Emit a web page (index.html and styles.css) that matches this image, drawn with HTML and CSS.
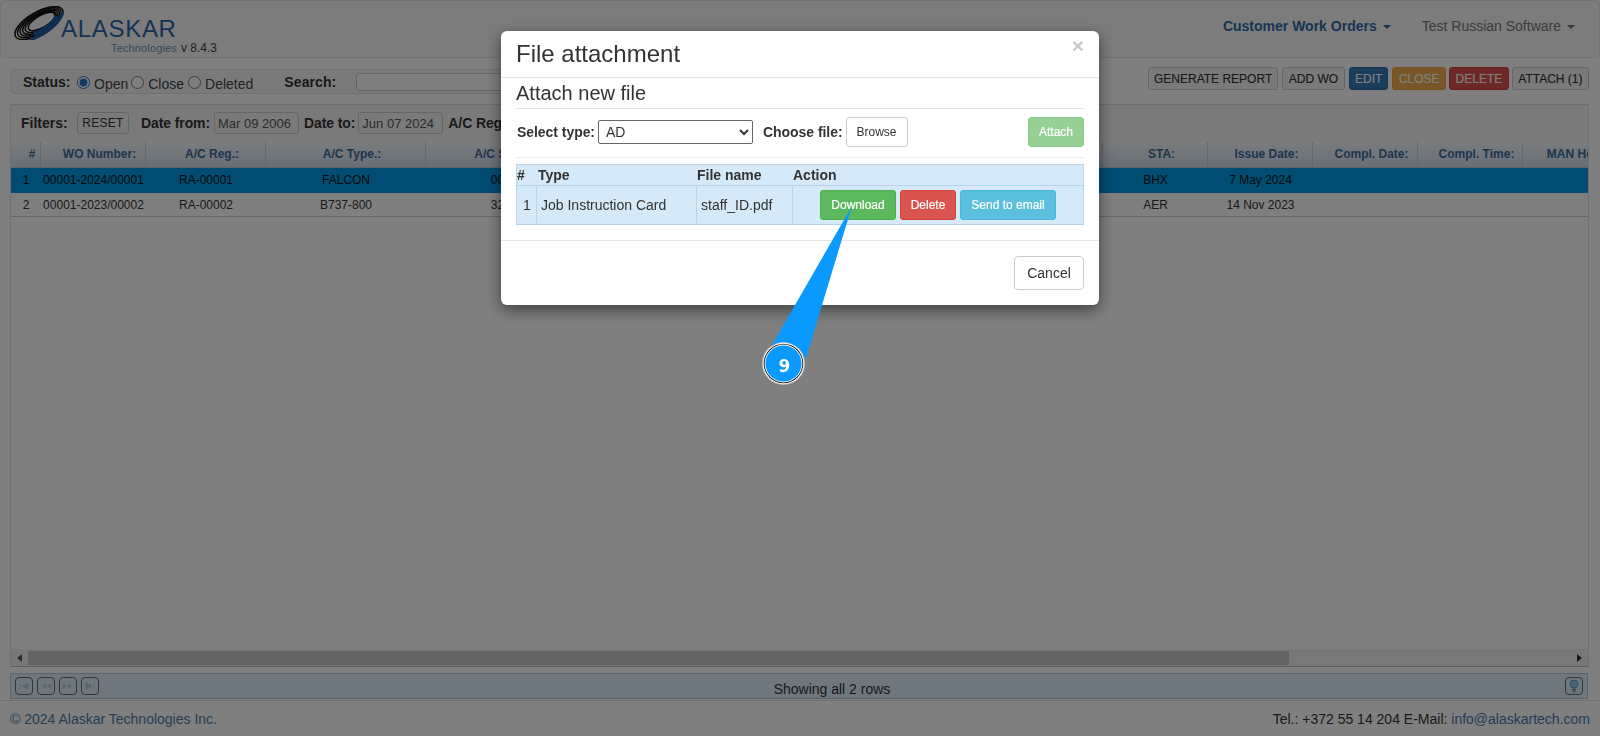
FILE: index.html
```html
<!DOCTYPE html>
<html lang="en">
<head>
<meta charset="utf-8">
<title>Customer Work Orders</title>
<link rel="stylesheet" href="styles.css">
</head>
<body>
<div class="page">
  <header class="navbar">
    <div class="brand">
      <svg class="ring" width="56" height="34" viewBox="0 0 56 34" fill="none">
        <g transform="rotate(-30 28 17)">
          <ellipse cx="28" cy="17" rx="27" ry="11" stroke="#111" stroke-width="1.500"/>
          <ellipse cx="28.500" cy="17" rx="24.600" ry="10" stroke="#111" stroke-width="1.500"/>
          <ellipse cx="29" cy="17" rx="22.200" ry="9" stroke="#111" stroke-width="1.500"/>
          <ellipse cx="29.500" cy="17" rx="19.800" ry="8" stroke="#111" stroke-width="1.500"/>
          <ellipse cx="30" cy="17" rx="17.400" ry="7" stroke="#111" stroke-width="1.500"/>
          <ellipse cx="31" cy="17" rx="15" ry="6" stroke="#111" stroke-width="1.500"/>
          <path d="M12 27C28 31 48 27 54 19" stroke="#1d5da5" stroke-width="3"/>
          <path d="M18 24C30 27 42 25 47 20" stroke="#1d5da5" stroke-width="4.500"/>
        </g>
      </svg>
      <div class="brand-text">
        <div class="brand-name">ALASKAR</div>
        <div class="brand-sub"><span class="brand-tech">Technologies</span><span class="brand-ver">v 8.4.3</span></div>
      </div>
    </div>
    <nav class="nav">
      <span class="nav-main">Customer Work Orders<i class="caret"></i></span>
      <span class="nav-user">Test Russian Software<i class="caret"></i></span>
    </nav>
  </header>

  <section class="toolbar">
    <div class="status">
      <b class="status-label">Status:</b>
      <label class="radio"><input type="radio" name="st" checked>Open</label>
      <label class="radio"><input type="radio" name="st">Close</label>
      <label class="radio"><input type="radio" name="st">Deleted</label>
      <b class="search-label">Search:</b>
      <input class="search" type="text">
    </div>
    <div class="actions">
      <button class="tb tb-gen">GENERATE REPORT</button>
      <button class="tb tb-add">ADD WO</button>
      <button class="tb tb-edit">EDIT</button>
      <button class="tb tb-close">CLOSE</button>
      <button class="tb tb-delete">DELETE</button>
      <button class="tb">ATTACH (1)</button>
    </div>
  </section>

  <section class="panel">
    <div class="filters">
      <b class="f-title">Filters:</b>
      <button class="reset">RESET</button>
      <b class="f-label">Date from:</b>
      <input class="date" type="text" value="Mar 09 2006">
      <b class="f-label2">Date to:</b>
      <input class="date" type="text" value="Jun 07 2024">
      <b class="f-label2">A/C Reg.:</b>
    </div>
    <div class="grid-wrap">
      <div class="grid-row grid-head">
        <div>#</div><div>WO Number:</div><div>A/C Reg.:</div><div>A/C Type.:</div><div>A/C S/N.:</div>
        <div></div><div></div><div></div><div></div>
        <div>STA:</div><div>Issue Date:</div><div>Compl. Date:</div><div>Compl. Time:</div><div>MAN Hours:</div>
      </div>
      <div class="grid-row grid-body selected">
        <div>1</div><div>00001-2024/00001</div><div>RA-00001</div><div>FALCON</div><div>00</div>
        <div></div><div></div><div></div><div></div>
        <div>BHX</div><div>7 May 2024</div><div></div><div></div><div></div>
      </div>
      <div class="grid-row grid-body">
        <div>2</div><div>00001-2023/00002</div><div>RA-00002</div><div>B737-800</div><div>32</div>
        <div></div><div></div><div></div><div></div>
        <div>AER</div><div>14 Nov 2023</div><div></div><div></div><div></div>
      </div>
    </div>
    <div class="scrollbar">
      <i class="arrow-left"></i>
      <div class="thumb"></div>
      <i class="arrow-right"></i>
    </div>
  </section>

  <section class="pager">
    <div class="pager-btns">
      <span class="pg"><svg width="12" height="10" viewBox="0 0 12 10"><path d="M2 2v6M10 2v6L4 5z" fill="#b9cbd6" stroke="#b9cbd6"/></svg></span>
      <span class="pg"><svg width="12" height="10" viewBox="0 0 12 10"><path d="M6 2L2 5l4 3zM11 2L7 5l4 3z" fill="#b9cbd6"/></svg></span>
      <span class="pg"><svg width="12" height="10" viewBox="0 0 12 10"><path d="M1 2l4 3-4 3zM6 2l4 3-4 3z" fill="#b9cbd6"/></svg></span>
      <span class="pg"><svg width="12" height="10" viewBox="0 0 12 10"><path d="M10 2v6M2 2v6l6-3z" fill="#b9cbd6" stroke="#b9cbd6"/></svg></span>
    </div>
    <div class="pager-info">Showing all 2 rows</div>
    <span class="pg"><svg width="12" height="14" viewBox="0 0 12 14" fill="none"><circle cx="6" cy="5" r="4" fill="#8cc8ea" stroke="#6f9cb8"/><path d="M4 10.500h4M4.500 12.500h3" stroke="#6f8a9a" stroke-width="1.300"/></svg></span>
  </section>

  <footer class="footer">
    <span class="copy">© 2024 Alaskar Technologies Inc.</span>
    <span class="contact">Tel.: +372 55 14 204 E-Mail: <span class="mail">info@alaskartech.com</span></span>
  </footer>
</div>

<div class="backdrop">
  <div class="modal">
    <div class="modal-head">
      <h4 class="modal-title">File attachment</h4>
      <span class="modal-x">×</span>
    </div>
    <div class="modal-body">
      <div class="sub-title">Attach new file</div>
      <div class="attach-row">
        <b class="lbl">Select type:</b>
        <select class="type-select"><option>AD</option></select>
        <b class="lbl lbl-file">Choose file:</b>
        <button class="btn btn-default btn-browse">Browse</button>
        <button class="btn btn-attach">Attach</button>
      </div>
      <div class="files">
        <div class="files-row files-head">
          <div>#</div><div>Type</div><div>File name</div><div>Action</div>
        </div>
        <div class="files-row files-item">
          <div class="num">1</div><div>Job Instruction Card</div><div>staff_ID.pdf</div>
          <div class="file-actions">
            <button class="btn btn-green">Download</button>
            <button class="btn btn-red">Delete</button>
            <button class="btn btn-blue">Send to email</button>
          </div>
        </div>
      </div>
    </div>
    <div class="modal-foot">
      <button class="btn btn-default btn-cancel">Cancel</button>
    </div>
  </div>
</div>

<div class="callout">
  <svg width="110" height="190" viewBox="0 0 110 190">
    <path d="M103 1L23 140 57 153z" fill="#0a9aff"/>
    <circle cx="34.500" cy="158.500" r="21.500" fill="#bbb"/>
    <circle cx="34.500" cy="158.500" r="20.700" fill="#fff"/>
    <circle cx="34.500" cy="158.500" r="19.800" fill="#111"/>
    <circle cx="34.500" cy="158.500" r="18.900" fill="#fff"/>
    <circle cx="34.500" cy="158.500" r="18" fill="#0a9aff"/>
  </svg>
  <span class="callout-num">9</span>
</div>
</body>
</html>
```

FILE: styles.css
```css
* { box-sizing: border-box; }
html, body { margin: 0; height: 100%; overflow: hidden; }
body { font-family: "Liberation Sans", Arial, sans-serif; font-size: 14px; color: #333; background: #fff; }
button { font-family: inherit; cursor: pointer; }

.page { height: 736px; display: flex; flex-direction: column; }

/* navbar */
.navbar { height: 58px; flex: none; background: #f8f8f8; border: 1px solid #e7e7e7; border-radius: 4px; display: flex; justify-content: space-between; }
.brand { display: flex; align-items: flex-start; padding: 5px 0 0 10px; }
.ring { flex: none; }
.brand-text { margin-left: -6px; padding-top: 11px; }
.brand-name { font-size: 24px; line-height: 24px; letter-spacing: .7px; color: #2a67a8; }
.brand-sub { display: flex; align-items: baseline; margin-left: 50px; line-height: 14px; }
.brand-tech { font-size: 11px; letter-spacing: .15px; color: #6c93b8; width: 70px; }
.brand-ver { font-size: 12px; color: #444; }
.nav { display: flex; gap: 31px; padding: 17px 24px 0 0; font-size: 14px; line-height: 17px; }
.nav-main { font-weight: bold; color: #2f6aa3; }
.nav-user { color: #777; }
.caret { display: inline-block; margin-left: 6px; vertical-align: middle; border-top: 4px solid; border-left: 4px solid transparent; border-right: 4px solid transparent; }

/* toolbar */
.toolbar { display: flex; justify-content: space-between; align-items: flex-start; padding: 10px 11px 0 10px; height: 46px; flex: none; }
.status { width: 1000px; height: 25px; margin-top: 1px; display: flex; align-items: center; background: #f5f5f5; border: 1px solid #e3e3e3; border-radius: 4px; padding: 2px 0 0 12px; }
.status-label { width: 54px; margin-bottom: 2px; }
.radio { display: flex; align-items: center; color: #444; padding-top: 2px; }
.radio input { margin: 0 4px 2px 0; width: 13px; height: 13px; accent-color: #2a6fc9; }
.radio + .radio { margin-left: 3px; }
.radio:last-of-type { margin-left: 4px; }
.search-label { margin-left: 31px; margin-bottom: 2px; letter-spacing: .1px; }
.search { margin-left: 20px; width: 600px; height: 18px; margin-bottom: 2px; border: 1px solid #ccc; border-radius: 3px; background: #fff; }
.actions { display: flex; gap: 4px; height: 23px; margin-top: -1px; }
.tb { height: 23px; padding: 0 5.500px; font-size: 12px; color: #333; background: #f5f5f5; border: 1px solid #ccc; border-radius: 3px; white-space: nowrap; -webkit-text-stroke: .15px; }
.tb-gen { padding: 0 4.500px; }
.tb-add { padding: 0 6px; }
.tb-edit { color: #fff; background: #337ab7; border-color: #2e6da4; padding: 0 5px; }
.tb-close { color: #fff; background: #f0ad4e; border-color: #eea236; margin-right: -1px; }
.tb-delete { color: #fff; background: #d9534f; border-color: #d43f3a; margin-right: -1px; }

/* panel */
.panel { margin: 0 11px 0 10px; height: 563px; flex: none; border: 1px solid #ddd; display: flex; flex-direction: column; overflow: hidden; background: #fff; border-bottom-color: #bbb; }
.filters { height: 37px; flex: none; display: flex; align-items: center; background: #f5f5f5; padding: 0 0 1px 10px; }
.f-title { width: 56px; }
.reset { width: 52px; height: 22px; padding: 0; font-size: 12px; letter-spacing: .3px; color: #333; background: #f5f5f5; border: 1px solid #ccc; border-radius: 3px; }
.f-label { margin-left: 12px; margin-right: 4px; letter-spacing: -.1px; }
.f-label2 { margin-left: 5px; margin-right: 3px; letter-spacing: -.1px; }
.date { width: 85px; height: 22px; padding: 0 3px; font: 13px "Liberation Sans", Arial, sans-serif; color: #555; background: #f5f5f5; border: 1px solid #ccc; border-radius: 3px; }

.grid-wrap { flex: 1; overflow: hidden; }
.grid-row { display: grid; grid-template-columns: 30px 105px 120px 160px 136px 135px 135px 135px 136px 105px 105px 105px 105px 105px; width: 1612px; font-size: 12px; }
.grid-row > div { text-align: center; white-space: nowrap; }
.grid-head { height: 26px; background: linear-gradient(#f4f8fc, #cfe0ee); border-bottom: 1px solid #b9cbdb; }
.grid-head > div { line-height: 25px; font-weight: bold; color: #3b6b98; padding-left: 13px; border-right: 1px solid #c2d2df; }
.grid-body { height: 24.500px; border-bottom: 1px solid #ccc; color: #333; }
.grid-body > div { line-height: 24px; }
.grid-body > div:nth-child(5) { padding-left: 7px; }
.selected { background: #0099e6; color: #111; border-bottom: 0; }

.scrollbar { height: 17px; flex: none; background: #f1f1f1; display: flex; align-items: center; padding: 0 5px 0 17px; position: relative; }
.thumb { width: 1261px; height: 14px; background: #c9c9c9; }
.arrow-left, .arrow-right { position: absolute; top: 5px; border-top: 4px solid transparent; border-bottom: 4px solid transparent; }
.arrow-left { left: 6px; border-right: 5px solid #555; }
.arrow-right { right: 6px; border-left: 5px solid #333; }

/* pager */
.pager { margin: 6px 12px 0 10px; height: 26px; flex: none; display: flex; align-items: center; justify-content: space-between; padding: 0 4px 0 4px; background: #dbeefa; border: 1px solid #b4cadb; }
.pager-btns { display: flex; gap: 4px; }
.pg { width: 18px; height: 18px; display: flex; align-items: center; justify-content: center; border: 1px solid #5f6f7a; border-radius: 4px; background: #dbeefa; }
.pager-info { font-size: 14px; padding-top: 5px; color: #333; }

/* footer */
.footer { flex: 1; display: flex; justify-content: space-between; align-items: flex-end; padding: 0 10px 9px; border-top: 1px solid #e5e5e5; margin-top: 1px; font-size: 14px; line-height: 16px; }
.copy { color: #4a7bab; }
.contact { color: #333; }
.mail { color: #3f79b3; }

/* modal */
.backdrop { position: fixed; inset: 0; background: rgba(0, 0, 0, .5); display: flex; justify-content: center; align-items: flex-start; }
.modal { width: 598px; height: 274px; margin-top: 31px; background: #fff; border-radius: 6px; box-shadow: 0 5px 15px rgba(0, 0, 0, .5); display: flex; flex-direction: column; }
.modal-head { height: 47px; flex: none; border-bottom: 1px solid #e5e5e5; padding: 9px 15px 0 15px; display: flex; justify-content: space-between; align-items: flex-start; }
.modal-title { margin: 0; font-size: 24px; font-weight: normal; line-height: 27px; color: #333; }
.modal-x { font-size: 21px; font-weight: bold; line-height: 10px; margin-top: 1px; color: #c8c8c8; }
.modal-body { height: 163px; flex: none; padding: 0 15px; border-bottom: 1px solid #e5e5e5; }
.sub-title { height: 31px; font-size: 20px; line-height: 31px; color: #333; border-bottom: 1px solid #e5e5e5; }
.attach-row { height: 49px; display: flex; align-items: flex-start; padding-top: 8px; border-bottom: 1px solid #eee; }
.lbl { line-height: 30px; margin-left: 1px; margin-right: 3px; font-size: 14px; letter-spacing: -.05px; }
.lbl-file { margin-left: 10px; }
.type-select { width: 155px; height: 24px; margin-top: 3px; padding-left: 3px; font: 14px "Liberation Sans", Arial, sans-serif; color: #333; background: #fff; border: 1px solid #666; border-radius: 2px; }
.btn { font-size: 12px; border-radius: 3px; border: 1px solid transparent; padding: 0; height: 30px; color: #fff; -webkit-text-stroke: .2px; }
.btn-default { background: #fff; border-color: #ccc; color: #333; -webkit-text-stroke: 0; }
.btn-browse { width: 62px; }
.btn-attach { width: 56px; margin-left: auto; background: #95d095; border-color: #8dcb8d; }
.btn-cancel { width: 70px; height: 34px; font-size: 14px; border-radius: 4px; }
.files { margin-top: 6px; border: 1px solid #b5d3ea; background: #d6e9f8; }
.files-row { display: grid; grid-template-columns: 20px 160px 96px 1fr; }
.files-head { height: 21px; font-weight: bold; line-height: 20px; border-bottom: 1px solid #b5d3ea; }
.files-head > div:nth-child(2) { padding-left: 1px; }
.files-item { height: 38px; line-height: 39px; }
.files-item > div { border-right: 1px solid #b5d3ea; padding-left: 4px; }
.files-item > div:last-child { border-right: 0; }
.files-item .num { padding-left: 6px; }
.file-actions { display: flex; gap: 4px; align-items: flex-start; padding: 4px 0 0 27px !important; }
.btn-green { width: 76px; background: #5cb85c; border-color: #4cae4c; }
.btn-red { width: 56px; background: #d9534f; border-color: #d43f3a; }
.btn-blue { width: 96px; background: #5bc0de; border-color: #46b8da; }
.modal-foot { flex: 1; display: flex; justify-content: flex-end; align-items: flex-start; padding: 15px 15px 0; }

/* callout */
.callout { position: absolute; left: 749px; top: 205px; width: 110px; height: 190px; }
.callout svg { display: block; }
.callout-num { position: absolute; left: 15.500px; top: 148.500px; width: 40px; text-align: center; font: bold 17px/24px "DejaVu Sans", sans-serif; color: #fff; }
```
